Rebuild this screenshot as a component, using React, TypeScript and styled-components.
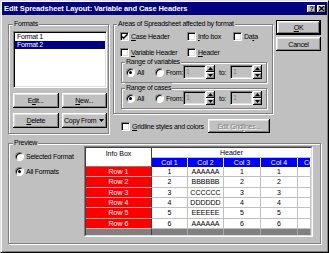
import React from "react";
import styled, { createGlobalStyle, css } from "styled-components";

const FONT = `"Liberation Sans", Arial, sans-serif`;

const GlobalStyle = createGlobalStyle`
  html, body { margin: 0; padding: 0; background: #c0c0c0; }
  body { font-family: ${FONT}; font-size: 7px; letter-spacing: -0.25px; color: #000; }
  * { box-sizing: border-box; }
`;

const Window = styled.div`
  width: 329px;
  height: 253px;
  background: #c0c0c0;
  border: 1px solid;
  border-color: #dfdfdf #000 #000 #dfdfdf;
  box-shadow: inset 1px 1px #fff, inset -1px -1px #808080;
  padding: 1px;
  display: flex;
  flex-direction: column;
  overflow: hidden;
`;

const TitleBar = styled.div`
  height: 13px;
  background: #000080;
  display: flex;
  align-items: center;
  padding: 0 1px 0 2px;
  color: #fff;
  font-weight: bold;
  font-size: 7.5px;
  letter-spacing: -0.1px;
  white-space: nowrap;
`;

const TitleText = styled.span`
  flex: 1;
  line-height: 13px;
`;

const TitleBtn = styled.span<{ $gap?: boolean }>`
  width: 9px;
  height: 8px;
  margin-left: ${(p) => (p.$gap ? "1px" : "0")};
  background: #c0c0c0;
  color: #000;
  box-shadow: inset -1px -1px #000, inset 1px 1px #fff, inset -2px -2px #808080;
  display: flex;
  align-items: center;
  justify-content: center;
  font-size: 7px;
  line-height: 8px;
`;

const Body = styled.div`
  flex: 1;
  display: flex;
  flex-direction: column;
  padding: 4px 6px 0 6px;
`;

const TopRow = styled.div`
  height: 115px;
  display: flex;
`;

const Group = styled.fieldset<{ $pad: string }>`
  margin: 0;
  min-width: 0;
  border: 1px solid #808080;
  box-shadow: inset 1px 1px #fff, 1px 1px #fff;
  padding: ${(p) => p.$pad};
`;

const Legend = styled.legend`
  padding: 0 1px;
  height: 10px;
  line-height: 10px;
  background: #c0c0c0;
`;

const FormatsGroup = styled(Group)`
  width: 101px;
  display: flex;
  flex-direction: column;
`;

const ListBox = styled.div`
  height: 57px;
  background: #fff;
  border: 1px solid;
  border-color: #808080 #fff #fff #808080;
  box-shadow: inset 1px 1px #000, inset -1px -1px #dfdfdf;
  padding: 1px;
`;

const ListItem = styled.div<{ $selected?: boolean }>`
  height: 8px;
  line-height: 8px;
  padding-left: 2px;
  white-space: nowrap;
  ${(p) =>
    p.$selected &&
    css`
      background: #000080;
      color: #fff;
    `}
`;

const ButtonGrid = styled.div`
  margin-top: 5px;
  display: grid;
  grid-template-columns: 1fr 1fr;
  gap: 5px 3px;
`;

const Button = styled.button<{ $default?: boolean; $h?: number; $w?: number }>`
  font: inherit;
  letter-spacing: inherit;
  color: #000;
  background: #c0c0c0;
  height: ${(p) => p.$h ?? 15}px;
  width: ${(p) => (p.$w ? `${p.$w}px` : "auto")};
  padding: 0;
  border: none;
  white-space: nowrap;
  display: flex;
  align-items: center;
  justify-content: center;
  gap: 3px;
  box-shadow: inset -1px -1px #000, inset 1px 1px #fff, inset -2px -2px #808080,
    inset 2px 2px #dfdfdf;
  ${(p) =>
    p.$default &&
    css`
      border: 1px solid #000;
    `}
  &:disabled {
    color: #808080;
    text-shadow: 1px 1px #fff;
  }
`;

const MiddleCol = styled.div`
  width: 160px;
  margin-left: 4px;
  display: flex;
  flex-direction: column;
`;

const AreasGroup = styled(Group)`
  height: 95px;
`;

const CheckGrid = styled.div`
  display: grid;
  grid-template-columns: 67px 46px auto;
  grid-auto-rows: 10px;
  row-gap: 6px;
  padding-left: 3px;
`;

const OptionLabel = styled.label<{ $w?: number }>`
  display: flex;
  align-items: center;
  gap: 2px;
  height: 10px;
  white-space: nowrap;
  width: ${(p) => (p.$w ? `${p.$w}px` : "auto")};
  flex: none;
`;

const CheckBox = styled.span`
  width: 9px;
  height: 9px;
  flex: none;
  background: #fff;
  border: 1px solid;
  border-color: #808080 #fff #fff #808080;
  box-shadow: inset 1px 1px #000, inset -1px -1px #dfdfdf;
  display: flex;
  align-items: center;
  justify-content: center;
`;

const RadioDot = styled.span<{ $on?: boolean }>`
  width: 9px;
  height: 9px;
  flex: none;
  border-radius: 50%;
  background: #fff;
  border: 1px solid;
  border-color: #808080 #fff #fff #808080;
  box-shadow: inset 1px 1px #000;
  display: flex;
  align-items: center;
  justify-content: center;
  &::after {
    content: "";
    width: 3px;
    height: 3px;
    border-radius: 50%;
    background: ${(p) => (p.$on ? "#000" : "transparent")};
  }
`;

const RangeGroup = styled(Group)`
  width: 146px;
  margin-left: 4px;
`;

const RangeRow = styled.div`
  height: 14px;
  margin-top: -2px;
  display: flex;
  align-items: center;
  padding-left: 1px;
`;

const TextBox = styled.div`
  width: 23px;
  height: 14px;
  flex: none;
  background: #c0c0c0;
  border: 1px solid;
  border-color: #808080 #fff #fff #808080;
  box-shadow: inset 1px 1px #000, inset -1px -1px #dfdfdf;
  color: #808080;
  padding-left: 2px;
  line-height: 12px;
`;

const Spinner = styled.div`
  width: 9px;
  height: 14px;
  flex: none;
  display: flex;
  flex-direction: column;
`;

const SpinBtn = styled.div`
  flex: 1;
  background: #c0c0c0;
  box-shadow: inset -1px -1px #000, inset 1px 1px #fff, inset -2px -2px #808080;
  display: flex;
  align-items: center;
  justify-content: center;
`;

const SmallLabel = styled.span<{ $ml?: number; $w?: number }>`
  margin-left: ${(p) => p.$ml ?? 0}px;
  width: ${(p) => p.$w ?? 10}px;
  flex: none;
  white-space: nowrap;
`;

const GridlineRow = styled.div`
  margin-top: 5px;
  height: 14px;
  display: flex;
  align-items: center;
  padding-left: 8px;
  padding-right: 3px;
  justify-content: space-between;
`;

const RightCol = styled.div`
  width: 45px;
  margin-left: 3px;
  padding-top: 1px;
  display: flex;
  flex-direction: column;
  gap: 2px;
`;

const PreviewGroup = styled(Group)`
  margin-top: 4px;
  height: 106px;
  display: flex;
`;

const RadioCol = styled.div`
  margin-left: 2px;
  padding-top: 3px;
  display: flex;
  flex-direction: column;
  gap: 5px;
`;

const Sheet = styled.div`
  margin-left: auto;
  margin-top: -2px;
  width: 229px;
  height: 91px;
  border: 1px solid;
  border-color: #808080 #fff #fff #808080;
`;

const SheetGrid = styled.div`
  height: 100%;
  border: 1px solid;
  border-color: #404040 #dfdfdf #dfdfdf #404040;
  display: grid;
  grid-template-columns: 66px 36px 36px 37px 37px 1fr;
  grid-template-rows: 10px 9px repeat(6, 10.33px) 1fr;
  overflow: hidden;
  background: #fff;
  line-height: 9px;
  letter-spacing: 0;
`;

const InfoHead = styled.div`
  grid-row: 1 / 3;
  background: #fff;
  border-right: 1px solid #404040;
  border-bottom: 1px solid #808080;
  text-align: center;
  padding-top: 1px;
`;

const HeaderCell = styled.div`
  grid-column: 2 / -1;
  background: #fff;
  border-bottom: 1px solid #c0c0c0;
  text-align: center;
  line-height: 9px;
`;

const ColHead = styled.div<{ $partial?: boolean }>`
  background: #0000ff;
  color: #fff;
  border-right: 1px solid #fff;
  text-align: ${(p) => (p.$partial ? "left" : "center")};
  padding-left: ${(p) => (p.$partial ? "6px" : "0")};
  white-space: nowrap;
  overflow: hidden;
  line-height: 9px;
`;

const RowHead = styled.div`
  background: #ff0000;
  color: #fff;
  border-right: 1px solid #404040;
  border-bottom: 1px solid #ffa0a0;
  display: flex;
  align-items: center;
  justify-content: center;
`;

const DataCell = styled.div`
  background: #fff;
  border-right: 1px solid #c0c0c0;
  border-bottom: 1px solid #c0c0c0;
  display: flex;
  align-items: center;
  justify-content: center;
  white-space: nowrap;
  overflow: hidden;
`;

const FootCell = styled.div<{ $info?: boolean }>`
  background: #808080;
  border-right: 1px solid ${(p) => (p.$info ? "#404040" : "#a8a8a8")};
`;

const Check = () => (
  <svg width="7" height="7" viewBox="0 0 7 7">
    <path d="M0.5 3.2 L2.6 5.3 L6.5 1.2" stroke="#000" strokeWidth="1.4" fill="none" />
  </svg>
);

const Arrow = ({ up }: { up?: boolean }) => (
  <svg width="5" height="3" viewBox="0 0 5 3">
    <polygon points={up ? "2.5,0 5,3 0,3" : "0,0 5,0 2.5,3"} fill="#000" />
  </svg>
);

const CheckOption = ({ checked, children }: { checked?: boolean; children: React.ReactNode }) => (
  <OptionLabel>
    <CheckBox>{checked && <Check />}</CheckBox>
    <span>{children}</span>
  </OptionLabel>
);

const RadioOption = ({ on, w, children }: { on?: boolean; w?: number; children: React.ReactNode }) => (
  <OptionLabel $w={w}>
    <RadioDot $on={on} />
    <span>{children}</span>
  </OptionLabel>
);

const Spin = () => (
  <Spinner>
    <SpinBtn>
      <Arrow up />
    </SpinBtn>
    <SpinBtn>
      <Arrow />
    </SpinBtn>
  </Spinner>
);

const Range = ({ title }: { title: string }) => (
  <RangeGroup $pad="0 2px 3px 3px">
    <Legend>{title}</Legend>
    <RangeRow>
      <RadioOption on w={29}>
        All
      </RadioOption>
      <RadioOption w={28}>From:</RadioOption>
      <TextBox>1</TextBox>
      <Spin />
      <SmallLabel $ml={4} $w={11}>
        to:
      </SmallLabel>
      <TextBox>1</TextBox>
      <Spin />
    </RangeRow>
  </RangeGroup>
);

const rows = [
  ["1", "AAAAAA", "1", "1"],
  ["2", "BBBBBB", "2", "2"],
  ["3", "CCCCCC", "3", "3"],
  ["4", "DDDDDD", "4", "4"],
  ["5", "EEEEEE", "5", "5"],
  ["6", "AAAAAA", "6", "6"],
];

export default function App() {
  return (
    <>
      <GlobalStyle />
      <Window>
        <TitleBar>
          <TitleText>Edit Spreadsheet Layout: Variable and Case Headers</TitleText>
          <TitleBtn>?</TitleBtn>
          <TitleBtn $gap>
            <svg width="5" height="5" viewBox="0 0 5 5">
              <path d="M0 0 L5 5 M5 0 L0 5" stroke="#000" strokeWidth="1.3" />
            </svg>
          </TitleBtn>
        </TitleBar>
        <Body>
          <TopRow>
            <FormatsGroup $pad="2px 1px 5px 4px">
              <Legend>Formats</Legend>
              <ListBox>
                <ListItem>Format 1</ListItem>
                <ListItem $selected>Format 2</ListItem>
              </ListBox>
              <ButtonGrid>
                <Button>
                  <span>
                    E<u>d</u>it...
                  </span>
                </Button>
                <Button>
                  <span>
                    <u>N</u>ew...
                  </span>
                </Button>
                <Button>
                  <span>
                    <u>D</u>elete
                  </span>
                </Button>
                <Button>
                  <span>Copy From</span>
                  <Arrow />
                </Button>
              </ButtonGrid>
            </FormatsGroup>

            <MiddleCol>
              <AreasGroup $pad="2px 5px 4px 3px">
                <Legend>Areas of Spreadsheet affected by format</Legend>
                <CheckGrid>
                  <CheckOption checked>
                    <u>C</u>ase Header
                  </CheckOption>
                  <CheckOption>
                    <u>I</u>nfo box
                  </CheckOption>
                  <CheckOption>
                    Da<u>t</u>a
                  </CheckOption>
                  <CheckOption>
                    <u>V</u>ariable Header
                  </CheckOption>
                  <CheckOption>
                    <u>H</u>eader
                  </CheckOption>
                </CheckGrid>
                <Range title="Range of variables" />
                <Range title="Range of cases" />
              </AreasGroup>
              <GridlineRow>
                <CheckOption>
                  <u>G</u>ridline styles and colors
                </CheckOption>
                <Button disabled $h={14} $w={62}>
                  <span>
                    Edit Grid<u>l</u>ines...
                  </span>
                </Button>
              </GridlineRow>
            </MiddleCol>

            <RightCol>
              <Button $default>
                <span>
                  <u>O</u>K
                </span>
              </Button>
              <Button $h={14}>Cancel</Button>
            </RightCol>
          </TopRow>

          <PreviewGroup $pad="0 7px 6px 4px">
            <Legend>Preview</Legend>
            <RadioCol>
              <RadioOption>Selected Format</RadioOption>
              <RadioOption on>All Formats</RadioOption>
            </RadioCol>
            <Sheet>
              <SheetGrid>
                <InfoHead>Info Box</InfoHead>
                <HeaderCell>Header</HeaderCell>
                <ColHead>Col 1</ColHead>
                <ColHead>Col 2</ColHead>
                <ColHead>Col 3</ColHead>
                <ColHead>Col 4</ColHead>
                <ColHead $partial>Col 5</ColHead>
                {rows.map((r, i) => (
                  <React.Fragment key={i}>
                    <RowHead>Row {i + 1}</RowHead>
                    {r.map((v, j) => (
                      <DataCell key={j}>{v}</DataCell>
                    ))}
                    <DataCell />
                  </React.Fragment>
                ))}
                <FootCell $info />
                <FootCell />
                <FootCell />
                <FootCell />
                <FootCell />
                <FootCell />
              </SheetGrid>
            </Sheet>
          </PreviewGroup>
        </Body>
      </Window>
    </>
  );
}
